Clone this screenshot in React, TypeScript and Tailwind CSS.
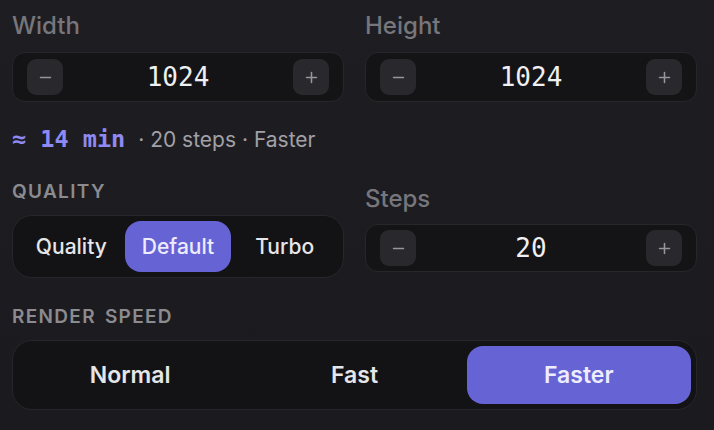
import { Minus, Plus } from "lucide-react";

const sans = "font-['Inter','Noto_Sans',sans-serif]";
const mono = "font-['DejaVu_Sans_Mono','Liberation_Mono',monospace]";

interface StepperProps {
  value: string;
  height: string;
}

const Stepper = ({ value, height }: StepperProps) => {
  return (
    <div
      className={`flex ${height} items-center justify-between rounded-[13px] border border-[#27272b] bg-[#141417] px-[14px]`}
    >
      <button className="flex h-9 w-9 items-center justify-center rounded-[9px] bg-[#28282d] text-[#96969c]">
        <Minus size={17} strokeWidth={2.2} />
      </button>
      <span className={`${mono} text-[26px] font-medium text-[#f0f0f2]`}>
        {value}
      </span>
      <button className="flex h-9 w-9 items-center justify-center rounded-[9px] bg-[#28282d] text-[#96969c]">
        <Plus size={17} strokeWidth={2.2} />
      </button>
    </div>
  );
};

interface SegmentProps {
  options: string[];
  active: string;
  pillHeight: string;
  textClass: string;
}

const Segment = ({ options, active, pillHeight, textClass }: SegmentProps) => {
  return (
    <div className="grid grid-cols-3 rounded-[20px] border border-[#27272b] bg-[#131316] p-[5px]">
      {options.map((option) => (
        <div
          key={option}
          className={`flex ${pillHeight} items-center justify-center rounded-[16px] ${textClass} ${
            option === active
              ? "bg-[#6664d4] text-[#eeecff]"
              : "text-[#e6e6e8]"
          }`}
        >
          {option}
        </div>
      ))}
    </div>
  );
};

const Label = ({ children }: { children: string }) => (
  <div className="text-[24px] leading-[28px] font-medium text-[#76767c]">
    {children}
  </div>
);

const SectionLabel = ({ children }: { children: string }) => (
  <div className="text-[19px] leading-[24px] font-semibold tracking-[0.07em] [word-spacing:0.15em] text-[#8b8b90]">
    {children}
  </div>
);

export default function App() {
  return (
    <div
      className={`${sans} h-[430px] w-[714px] overflow-hidden bg-gradient-to-b from-[#1e1e22] to-[#1b1b1f] pl-3 pr-[17px] pt-[12px]`}
    >
      {/* WIDTH / HEIGHT */}
      <div className="grid grid-cols-2 gap-x-[21px]">
        <div>
          <Label>Width</Label>
          <div className="mt-[12px]">
            <Stepper value="1024" height="h-[50px]" />
          </div>
        </div>
        <div>
          <Label>Height</Label>
          <div className="mt-[12px]">
            <Stepper value="1024" height="h-[50px]" />
          </div>
        </div>
      </div>

      {/* ESTIMATE */}
      <div className="mt-[24px] flex h-[28px] items-center gap-[13px]">
        <span className={`${mono} text-[23.5px] font-bold text-[#8f8af2]`}>
          ≈ 14 min
        </span>
        <span className="text-[21px] text-[#a1a1a7]">· 20 steps · Faster</span>
      </div>

      {/* QUALITY / STEPS */}
      <div className="mt-[26px] grid grid-cols-2 items-start gap-x-[21px]">
        <div>
          <SectionLabel>QUALITY</SectionLabel>
          <div className="mt-[11px]">
            <Segment
              options={["Quality", "Default", "Turbo"]}
              active="Default"
              pillHeight="h-[51px]"
              textClass="text-[21px] font-medium"
            />
          </div>
        </div>
        <div className="pt-[5px]">
          <Label>Steps</Label>
          <div className="mt-[11px]">
            <Stepper value="20" height="h-[48px]" />
          </div>
        </div>
      </div>

      {/* RENDER SPEED */}
      <div className="mt-[27px]">
        <SectionLabel>RENDER SPEED</SectionLabel>
        <div className="mt-[11px]">
          <Segment
            options={["Normal", "Fast", "Faster"]}
            active="Faster"
            pillHeight="h-[58px]"
            textClass="text-[23px] font-semibold"
          />
        </div>
      </div>
    </div>
  );
}
